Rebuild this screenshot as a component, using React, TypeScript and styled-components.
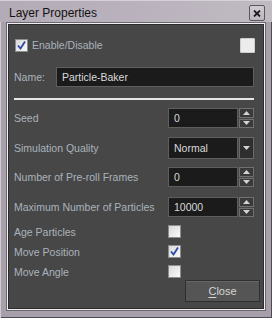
import React from "react";
import styled, { createGlobalStyle } from "styled-components";

const Global = createGlobalStyle`
  html, body { margin: 0; padding: 0; background: #a7a0aa; }
  * { box-sizing: border-box; }
`;

const Window = styled.div`
  width: 272px;
  height: 318px;
  display: flex;
  flex-direction: column;
  background: #a7a0aa;
  box-shadow: inset 1px 1px 0 #cfc9d1, inset -1px -1px 0 #4e4a50;
  font-family: "Liberation Sans", Arial, sans-serif;
  font-size: 10.5px;
`;

const TitleBar = styled.div`
  height: 22px;
  display: flex;
  justify-content: space-between;
  padding: 0 7px 0 9px;
  background: linear-gradient(to right, #b3abb6, #c0bac3);
  box-shadow: inset 0 1px 0 #d6d0d8;
`;

const Title = styled.div`
  align-self: center;
  padding-top: 4px;
  font-size: 12px;
  color: #121212;
`;

const CloseX = styled.div`
  align-self: flex-end;
  margin-bottom: 1px;
  width: 16px;
  height: 16px;
  border: 1px solid #5a565c;
  border-radius: 2px;
  background: linear-gradient(#cfcbd2, #bcb7bf);
  display: flex;
  align-items: center;
  justify-content: center;
`;

const Body = styled.div`
  flex: 1;
  padding: 0 6px 7px 6px;
  display: flex;
`;

const Panel = styled.div`
  flex: 1;
  border: 1px solid #6b6670;
  box-shadow: inset 0 0 0 1px #f0f0f0, inset 0 0 0 2px #2c2c2c;
  background: #474747;
  padding: 14px 6px 6px 7px;
  display: flex;
  flex-direction: column;
`;

const Row = styled.div<{ $mt: number; $h: number }>`
  margin-top: ${(p) => p.$mt}px;
  height: ${(p) => p.$h}px;
  display: flex;
  align-items: center;
`;

const Label = styled.div<{ $w: number }>`
  width: ${(p) => p.$w}px;
  color: #aab3bc;
  white-space: nowrap;
`;

const EnableLabel = styled.div`
  flex: 1;
  margin-left: 4px;
  color: #aab3bc;
`;

const Swatch = styled.div`
  width: 15px;
  height: 15px;
  margin-right: 4px;
  background: #ececec;
  border: 1px solid #cfcfcf;
  border-radius: 1px;
`;

const Box = styled.div<{ $ml?: number }>`
  width: 13px;
  height: 13px;
  margin-left: ${(p) => p.$ml ?? 0}px;
  border: 1px solid #8c8c8c;
  background: linear-gradient(135deg, #d8d8d8, #fafafa);
  display: flex;
  align-items: center;
  justify-content: center;
`;

const TextInput = styled.div<{ $w: number }>`
  width: ${(p) => p.$w}px;
  height: 100%;
  background: #1b1b1b;
  border: 1px solid #5e5e5e;
  color: #dadada;
  display: flex;
  align-items: center;
  padding-left: 5px;
`;

const Control = styled.div`
  width: 86px;
  height: 100%;
  display: flex;
  gap: 1px;
`;

const SpinCol = styled.div`
  width: 15px;
  display: flex;
  flex-direction: column;
  gap: 1px;
`;

const SpinBtn = styled.div`
  flex: 1;
  background: #3a3a3a;
  border: 1px solid #707070;
  display: flex;
  align-items: center;
  justify-content: center;
`;

const DropBtn = styled.div`
  width: 15px;
  background: #2e2e2e;
  border: 1px solid #6a6a6a;
  display: flex;
  align-items: center;
  justify-content: center;
`;

const Divider = styled.div`
  margin-top: 11px;
  height: 2px;
  margin-right: 5px;
  background: #e6e6e6;
`;

const ButtonRow = styled.div`
  margin-top: 2px;
  display: flex;
  justify-content: flex-end;
`;

const CloseButton = styled.div`
  width: 75px;
  height: 22px;
  margin-right: -1px;
  background: #555555;
  border: 1px solid #2f2f2f;
  box-shadow: inset 0 1px 0 #666;
  color: #d6d6d6;
  font-size: 11px;
  display: flex;
  align-items: center;
  justify-content: center;
  u { text-decoration: underline; text-underline-offset: 2px; }
`;

const Check = () => (
  <svg width="11" height="11" viewBox="0 0 11 11">
    <path d="M2 5.5 L4.5 8.5 L9 1.5" fill="none" stroke="#2b48a6" strokeWidth="1.8" />
  </svg>
);

const Tri = ({ up }: { up?: boolean }) => (
  <svg width="7" height="4" viewBox="0 0 7 4">
    <path d={up ? "M0 4 L3.5 0 L7 4 Z" : "M0 0 L3.5 4 L7 0 Z"} fill="#d4d4d4" />
  </svg>
);

const Spin = ({ value }: { value: string }) => (
  <Control>
    <TextInput $w={70}>{value}</TextInput>
    <SpinCol>
      <SpinBtn><Tri up /></SpinBtn>
      <SpinBtn><Tri /></SpinBtn>
    </SpinCol>
  </Control>
);

export default function App() {
  return (
    <>
      <Global />
      <Window>
        <TitleBar>
          <Title>Layer Properties</Title>
          <CloseX>
            <svg width="8" height="7" viewBox="0 0 8 7">
              <path d="M1 0.5 L7 6.5 M7 0.5 L1 6.5" stroke="#1e1e1e" strokeWidth="1.8" />
            </svg>
          </CloseX>
        </TitleBar>
        <Body>
          <Panel>
            <Row $mt={0} $h={16}>
              <Box $ml={1}><Check /></Box>
              <EnableLabel>Enable/Disable</EnableLabel>
              <Swatch />
            </Row>
            <Row $mt={14} $h={20}>
              <Label $w={42}>Name:</Label>
              <TextInput $w={198}>Particle-Baker</TextInput>
            </Row>
            <Divider />
            <Row $mt={8} $h={20}>
              <Label $w={154}>Seed</Label>
              <Spin value="0" />
            </Row>
            <Row $mt={9} $h={22}>
              <Label $w={154}>Simulation Quality</Label>
              <Control>
                <TextInput $w={70}>Normal</TextInput>
                <DropBtn><Tri /></DropBtn>
              </Control>
            </Row>
            <Row $mt={8} $h={20}>
              <Label $w={154}>Number of Pre-roll Frames</Label>
              <Spin value="0" />
            </Row>
            <Row $mt={10} $h={20}>
              <Label $w={154}>Maximum Number of Particles</Label>
              <Spin value="10000" />
            </Row>
            <Row $mt={8} $h={13}>
              <Label $w={154}>Age Particles</Label>
              <Box />
            </Row>
            <Row $mt={7} $h={13}>
              <Label $w={154}>Move Position</Label>
              <Box><Check /></Box>
            </Row>
            <Row $mt={7} $h={13}>
              <Label $w={154}>Move Angle</Label>
              <Box />
            </Row>
            <ButtonRow>
              <CloseButton><span><u>C</u>lose</span></CloseButton>
            </ButtonRow>
          </Panel>
        </Body>
      </Window>
    </>
  );
}
